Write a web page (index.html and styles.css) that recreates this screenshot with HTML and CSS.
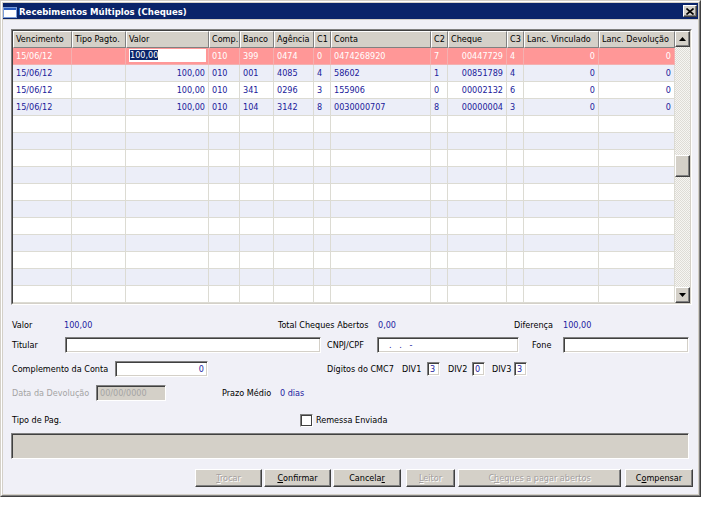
FILE: index.html
```html
<!DOCTYPE html>
<html lang="pt">
<head>
<meta charset="utf-8">
<title>Recebimentos Múltiplos (Cheques)</title>
<link rel="stylesheet" href="styles.css">
</head>
<body>
<div class="window">
  <div class="frame">
    <div class="titlebar">
      <svg class="ticon" width="14" height="11" viewBox="0 0 14 11"><rect x="0.5" y="0.5" width="13" height="10" fill="#fff" stroke="#7a9cd8"/><rect x="1" y="1" width="12" height="2" fill="#2a5cc0"/></svg>
      <span class="ttext">Recebimentos Múltiplos (Cheques)</span>
      <span class="tclose"><svg width="8" height="7" viewBox="0 0 8 7"><path d="M0.5 0.5 L7.5 6.5 M7.5 0.5 L0.5 6.5" stroke="#000" stroke-width="1.6"/></svg></span>
    </div>
    <div class="client">
      <div class="grid">
        <div class="grid-in">
          <div class="gbody">
            <div class="rows">
              <div class="grow head">
                <div class="h">Vencimento</div><div class="h">Tipo Pagto.</div><div class="h">Valor</div><div class="h">Comp.</div><div class="h">Banco</div><div class="h">Agência</div><div class="h">C1</div><div class="h">Conta</div><div class="h">C2</div><div class="h">Cheque</div><div class="h">C3</div><div class="h">Lanc. Vinculado</div><div class="h">Lanc. Devolução</div>
              </div>
              <div class="grow sel">
                <div class="c">15/06/12</div><div class="c"></div><div class="c edit"><div class="editor"><span class="seltext">100,00</span></div></div><div class="c">010</div><div class="c">399</div><div class="c">0474</div><div class="c">0</div><div class="c">0474268920</div><div class="c">7</div><div class="c r">00447729</div><div class="c">4</div><div class="c r">0</div><div class="c r">0</div>
              </div>
              <div class="grow alt">
                <div class="c">15/06/12</div><div class="c"></div><div class="c r">100,00</div><div class="c">010</div><div class="c">001</div><div class="c">4085</div><div class="c">4</div><div class="c">58602</div><div class="c">1</div><div class="c r">00851789</div><div class="c">4</div><div class="c r">0</div><div class="c r">0</div>
              </div>
              <div class="grow">
                <div class="c">15/06/12</div><div class="c"></div><div class="c r">100,00</div><div class="c">010</div><div class="c">341</div><div class="c">0296</div><div class="c">3</div><div class="c">155906</div><div class="c">0</div><div class="c r">00002132</div><div class="c">6</div><div class="c r">0</div><div class="c r">0</div>
              </div>
              <div class="grow alt">
                <div class="c">15/06/12</div><div class="c"></div><div class="c r">100,00</div><div class="c">010</div><div class="c">104</div><div class="c">3142</div><div class="c">8</div><div class="c">0030000707</div><div class="c">8</div><div class="c r">00000004</div><div class="c">3</div><div class="c r">0</div><div class="c r">0</div>
              </div>
              <div class="grow"><div class="c"></div><div class="c"></div><div class="c"></div><div class="c"></div><div class="c"></div><div class="c"></div><div class="c"></div><div class="c"></div><div class="c"></div><div class="c"></div><div class="c"></div><div class="c"></div><div class="c"></div></div>
              <div class="grow alt"><div class="c"></div><div class="c"></div><div class="c"></div><div class="c"></div><div class="c"></div><div class="c"></div><div class="c"></div><div class="c"></div><div class="c"></div><div class="c"></div><div class="c"></div><div class="c"></div><div class="c"></div></div>
              <div class="grow"><div class="c"></div><div class="c"></div><div class="c"></div><div class="c"></div><div class="c"></div><div class="c"></div><div class="c"></div><div class="c"></div><div class="c"></div><div class="c"></div><div class="c"></div><div class="c"></div><div class="c"></div></div>
              <div class="grow alt"><div class="c"></div><div class="c"></div><div class="c"></div><div class="c"></div><div class="c"></div><div class="c"></div><div class="c"></div><div class="c"></div><div class="c"></div><div class="c"></div><div class="c"></div><div class="c"></div><div class="c"></div></div>
              <div class="grow"><div class="c"></div><div class="c"></div><div class="c"></div><div class="c"></div><div class="c"></div><div class="c"></div><div class="c"></div><div class="c"></div><div class="c"></div><div class="c"></div><div class="c"></div><div class="c"></div><div class="c"></div></div>
              <div class="grow alt"><div class="c"></div><div class="c"></div><div class="c"></div><div class="c"></div><div class="c"></div><div class="c"></div><div class="c"></div><div class="c"></div><div class="c"></div><div class="c"></div><div class="c"></div><div class="c"></div><div class="c"></div></div>
              <div class="grow"><div class="c"></div><div class="c"></div><div class="c"></div><div class="c"></div><div class="c"></div><div class="c"></div><div class="c"></div><div class="c"></div><div class="c"></div><div class="c"></div><div class="c"></div><div class="c"></div><div class="c"></div></div>
              <div class="grow alt"><div class="c"></div><div class="c"></div><div class="c"></div><div class="c"></div><div class="c"></div><div class="c"></div><div class="c"></div><div class="c"></div><div class="c"></div><div class="c"></div><div class="c"></div><div class="c"></div><div class="c"></div></div>
              <div class="grow"><div class="c"></div><div class="c"></div><div class="c"></div><div class="c"></div><div class="c"></div><div class="c"></div><div class="c"></div><div class="c"></div><div class="c"></div><div class="c"></div><div class="c"></div><div class="c"></div><div class="c"></div></div>
              <div class="grow alt"><div class="c"></div><div class="c"></div><div class="c"></div><div class="c"></div><div class="c"></div><div class="c"></div><div class="c"></div><div class="c"></div><div class="c"></div><div class="c"></div><div class="c"></div><div class="c"></div><div class="c"></div></div>
              <div class="grow"><div class="c"></div><div class="c"></div><div class="c"></div><div class="c"></div><div class="c"></div><div class="c"></div><div class="c"></div><div class="c"></div><div class="c"></div><div class="c"></div><div class="c"></div><div class="c"></div><div class="c"></div></div>
            </div>
            <div class="vscroll">
              <div class="sbtn"><svg width="7" height="4" viewBox="0 0 7 4"><polygon points="3.5,0 7,4 0,4" fill="#000"/></svg></div>
              <div class="track"><div class="thumb"></div></div>
              <div class="sbtn"><svg width="7" height="4" viewBox="0 0 7 4"><polygon points="0,0 7,0 3.5,4" fill="#000"/></svg></div>
            </div>
          </div>
        </div>
      </div>

      <div class="frow rowa">
        <span class="lbl w52">Valor</span><span class="val w214">100,00</span>
        <span class="lbl w100">Total Cheques Abertos</span><span class="val w136">0,00</span>
        <span class="lbl w49">Diferença</span><span class="val">100,00</span>
      </div>

      <div class="frow rowb">
        <span class="lbl w53">Titular</span><span class="inp w256"></span>
        <span class="lbl w50 ml6">CNPJ/CPF</span><span class="inp w142 mask">.&nbsp;&nbsp;&nbsp;.&nbsp;&nbsp;&nbsp;-</span>
        <span class="lbl w31 ml13">Fone</span><span class="inp w126"></span>
      </div>

      <div class="frow rowc">
        <span class="lbl w103">Complemento da Conta</span><span class="inp w93 num">0</span>
        <span class="lbl w75 ml119">Dígitos do CMC7</span>
        <span class="lbl w25">DIV1</span><span class="inp small">3</span>
        <span class="lbl w24 ml8">DIV2</span><span class="inp small">0</span>
        <span class="lbl w22 ml7">DIV3</span><span class="inp small">3</span>
      </div>

      <div class="frow rowd">
        <span class="lbl dis w84">Data da Devolução</span><span class="inp disabled w70">00/00/0000</span>
        <span class="lbl w58 ml56">Prazo Médio</span><span class="val">0 dias</span>
      </div>

      <div class="frow rowe">
        <span class="lbl w288">Tipo de Pag.</span><span class="chk"></span><span class="lbl ml3">Remessa Enviada</span>
      </div>

      <div class="panel"></div>

      <div class="buttons">
        <span class="btn off w67"><u>T</u>rocar</span>
        <span class="btn w67 ml2"><u>C</u>onfirmar</span>
        <span class="btn w68 ml2">Cancela<u>r</u></span>
        <span class="btn off w49 ml5"><u>L</u>eitor</span>
        <span class="btn off w163 ml3">C<u>h</u>eques a pagar abertos</span>
        <span class="btn w68 ml4">C<u>o</u>mpensar</span>
      </div>
    </div>
  </div>
</div>
</body>
</html>
```

FILE: styles.css
```css
* { box-sizing: border-box; }
html, body { margin: 0; padding: 0; background: #fff; }
body {
  font-family: "DejaVu Sans Condensed", "DejaVu Sans", sans-serif;
  font-stretch: condensed;
  font-size: 9px;
  color: #000;
}

.window {
  width: 701px;
  height: 497px;
  display: flex;
  border: 1px solid;
  border-color: #d4d0c8 #404040 #404040 #d4d0c8;
}
.frame {
  flex: 1;
  display: flex;
  flex-direction: column;
  border: 1px solid;
  border-color: #fff #808080 #808080 #fff;
  padding: 1px;
  background: #d4d0c8;
}

.titlebar {
  height: 16px;
  flex: none;
  display: flex;
  align-items: center;
  background: #0a246a;
  margin-bottom: 1px;
}
.ticon { margin-left: 0; margin-top: 2px; flex: none; }
.ttext {
  margin-left: 2px;
  color: #fff;
  font-weight: bold;
  font-size: 9.5px;
}
.tclose {
  margin-left: auto;
  margin-right: 1px;
  width: 14px;
  height: 12px;
  background: #d4d0c8;
  border: 1px solid;
  border-color: #fff #404040 #404040 #fff;
  box-shadow: inset -1px -1px 0 #808080;
  display: flex;
  align-items: center;
  justify-content: center;
}

.client {
  flex: 1;
  background: #f0f0f7;
  padding-left: 8px;
  display: flex;
  flex-direction: column;
}

/* grid */
.grid {
  margin-top: 9px;
  width: 681px;
  border: 1px solid;
  border-color: #808080 #fff #fff #808080;
}
.grid-in {
  border: 1px solid;
  border-color: #404040 #d4d0c8 #d4d0c8 #404040;
}
.gbody { display: flex; height: 272px; }
.rows { width: 662px; background: #fff; }
.grow {
  display: grid;
  grid-template-columns: 59px 54px 83px 31px 34px 40px 17px 100px 17px 59px 17px 75px 76px;
  height: 17px;
}
.grow.alt { background: #eceef8; }
.grow.sel { background: #ff9797; color: #fff; }
.c {
  border-right: 1px solid #dcdbd3;
  border-bottom: 1px solid #dcdbd3;
  padding: 0 3px;
  line-height: 16px;
  color: #20209a;
  white-space: nowrap;
  overflow: hidden;
}
.sel .c { color: #fff; border-color: #f4b0b0; }
.c.r { text-align: right; }
.c.edit { padding: 1px 2px 2px 3px; }
.editor {
  background: #fff;
  height: 13px;
  line-height: 13px;
  padding-left: 1px;
}
.seltext { background: #0a246a; color: #fff; }

.head .h {
  background: #d4d0c8;
  border: 1px solid;
  border-color: #fff #808080 #808080 #fff;
  padding-left: 2px;
  line-height: 15px;
  white-space: nowrap;
  overflow: hidden;
  color: #000;
}

.vscroll { width: 15px; display: flex; flex-direction: column; }
.sbtn {
  height: 16px;
  flex: none;
  background: #d4d0c8;
  border: 1px solid;
  border-color: #fff #404040 #404040 #fff;
  box-shadow: inset -1px -1px 0 #808080;
  display: flex;
  align-items: center;
  justify-content: center;
}
.track {
  flex: 1;
  background: repeating-conic-gradient(#f6f5f2 0 25%, #dedcd6 0 50%) 0 0 / 2px 2px;
}
.thumb {
  margin-top: 108px;
  height: 22px;
  background: #d4d0c8;
  border: 1px solid;
  border-color: #fff #404040 #404040 #fff;
  box-shadow: inset -1px -1px 0 #808080;
}

/* form */
.frow { display: flex; align-items: center; padding-left: 1px; }
.rowa { margin-top: 13px; height: 14px; }
.rowb { margin-top: 5px; height: 16px; }
.rowc { margin-top: 8px; height: 16px; }
.rowd { margin-top: 8px; height: 16px; }
.rowe { margin-top: 12px; height: 14px; }

.lbl { flex: none; white-space: nowrap; color: #000; }
.lbl.dis { color: #a4a4a4; }
.val { flex: none; color: #2222a0; white-space: nowrap; }

.inp {
  flex: none;
  height: 16px;
  background: #fff;
  border: 1px solid;
  border-color: #808080 #fff #fff #808080;
  box-shadow: inset 1px 1px 0 #404040, inset -1px -1px 0 #d4d0c8;
  padding: 0 3px;
  line-height: 14px;
  color: #2222a0;
  white-space: nowrap;
}
.inp.num { text-align: right; }
.inp.mask { padding-left: 11px; }
.inp.small { width: 13px; height: 14px; line-height: 12px; padding: 0 2px; }
.inp.disabled { background: #d4d0c8; color: #a4a4a4; box-shadow: inset 1px 1px 0 #404040; border-color: #808080 #fff #fff #808080; }

.chk {
  flex: none;
  width: 13px;
  height: 13px;
  background: #fff;
  border: 1px solid;
  border-color: #808080 #fff #fff #808080;
  box-shadow: inset 1px 1px 0 #404040, inset -1px -1px 0 #404040;
}

.panel {
  margin-top: 6px;
  width: 678px;
  height: 26px;
  background: #d4d0c8;
  border: 1px solid;
  border-color: #808080 #fff #fff #808080;
  box-shadow: inset 1px 1px 0 #404040;
}

.buttons {
  margin-top: 10px;
  padding-left: 184px;
  display: flex;
}
.btn {
  flex: none;
  height: 18px;
  background: #d4d0c8;
  border: 1px solid;
  border-color: #fff #404040 #404040 #fff;
  box-shadow: inset -1px -1px 0 #808080;
  text-align: center;
  line-height: 16px;
  color: #000;
}
.btn u { text-decoration: underline; }
.btn.off { color: #a4a0a0; text-shadow: 1px 1px 0 #fff; }

/* widths */
.w22 { width: 22px; } .w24 { width: 24px; } .w25 { width: 25px; } .w31 { width: 31px; }
.w49 { width: 49px; } .w50 { width: 50px; } .w52 { width: 52px; } .w53 { width: 53px; }
.w58 { width: 58px; } .w67 { width: 67px; } .w68 { width: 68px; } .w70 { width: 70px; }
.w75 { width: 75px; } .w84 { width: 84px; } .w93 { width: 93px; } .w100 { width: 100px; }
.w103 { width: 103px; } .w126 { width: 126px; } .w136 { width: 136px; } .w142 { width: 142px; }
.w163 { width: 163px; } .w214 { width: 214px; } .w256 { width: 256px; } .w288 { width: 288px; }
.ml2 { margin-left: 2px; } .ml3 { margin-left: 3px; } .ml4 { margin-left: 4px; } .ml5 { margin-left: 5px; }
.ml6 { margin-left: 6px; } .ml7 { margin-left: 7px; } .ml8 { margin-left: 8px; } .ml13 { margin-left: 13px; }
.ml56 { margin-left: 56px; } .ml119 { margin-left: 119px; }
```
